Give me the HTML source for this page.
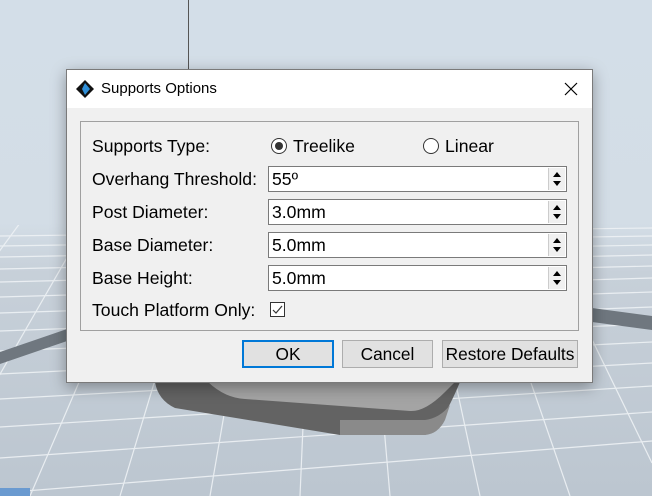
<!DOCTYPE html>
<html style="overflow:hidden;height:496px"><head><style>
body{margin:0;width:652px;height:496px;overflow:hidden;position:relative;font-family:"Liberation Sans",sans-serif;background:#d3dee8;}
.abs{position:absolute}
.dlg{left:66px;top:69px;width:525px;height:312px;background:#f0f0f0;border:1px solid #7a7a7a;box-shadow:0 4px 14px rgba(0,0,0,.35)}
.tb{left:0;top:0;width:525px;height:38px;background:#fff}
.lbl{font-size:17.6px;color:#000}
.spin{left:201px;width:297px;height:24px;background:#fff;border:1px solid #7a7a7a}
.spin span{position:absolute;left:3px;top:2px;font-size:17.6px}
.arr{position:absolute;right:1px;top:1px;width:16px;height:22px;background:#f0f0f0;border-left:1px solid #ccc}
.arr:before{content:"";position:absolute;left:4px;top:4px;border:4px solid transparent;border-bottom:5px solid #000;border-top:0}
.arr:after{content:"";position:absolute;left:4px;top:13px;border:4px solid transparent;border-top:5px solid #000;border-bottom:0}
.btn{top:270px;height:26px;background:#e1e1e1;border:1px solid #adadad;font-size:17.3px;text-align:center;line-height:26px}
</style></head><body>
<svg class="abs" style="left:0;top:0;display:block" width="652" height="496">
<defs><linearGradient id="g" x1="0" y1="0" x2="0" y2="1"><stop offset="0" stop-color="#d3dee8"/><stop offset="0.45" stop-color="#d3dde6"/><stop offset="0.55" stop-color="#c7d0d9"/><stop offset="1" stop-color="#bcc6d0"/></linearGradient>
<clipPath id="c"><rect x="0" y="225" width="652" height="271"/></clipPath></defs>
<rect width="652" height="496" fill="url(#g)"/>
<g clip-path="url(#c)" stroke="#eef2f5" stroke-width="1.2" opacity="0.9">
<line x1="0" y1="236" x2="652" y2="228"/><line x1="0" y1="246" x2="652" y2="236"/><line x1="0" y1="257" x2="652" y2="245"/><line x1="0" y1="269" x2="652" y2="255"/><line x1="0" y1="282" x2="652" y2="266"/><line x1="0" y1="297" x2="652" y2="278"/><line x1="0" y1="313" x2="652" y2="292"/><line x1="0" y1="331" x2="652" y2="307"/><line x1="0" y1="351" x2="652" y2="324"/><line x1="0" y1="374" x2="652" y2="342"/><line x1="0" y1="399" x2="652" y2="363"/><line x1="0" y1="427" x2="652" y2="386"/><line x1="0" y1="458" x2="652" y2="412"/><line x1="0" y1="493" x2="652" y2="441"/>
<line x1="330" y1="-200" x2="-700" y2="496"/><line x1="330" y1="-200" x2="-560" y2="496"/><line x1="330" y1="-200" x2="-430" y2="496"/><line x1="330" y1="-200" x2="-300" y2="496"/><line x1="330" y1="-200" x2="-180" y2="496"/><line x1="330" y1="-200" x2="-70" y2="496"/><line x1="330" y1="-200" x2="30" y2="496"/><line x1="330" y1="-200" x2="120" y2="496"/><line x1="330" y1="-200" x2="210" y2="496"/><line x1="330" y1="-200" x2="300" y2="496"/><line x1="330" y1="-200" x2="390" y2="496"/><line x1="330" y1="-200" x2="480" y2="496"/><line x1="330" y1="-200" x2="570" y2="496"/><line x1="330" y1="-200" x2="652" y2="463"/>
</g>
<path d="M0 352 L70 328 L70 340 L0 364Z" fill="#6f777f"/>
<path d="M592 308 L652 316 L652 330 L592 322Z" fill="#6f777f"/>
<rect x="0" y="488" width="30" height="8" fill="#6a9ad0"/>
<path d="M155 382 Q158 400 175 408 L340 435 L425 435 Q440 430 460 382 Z" fill="#636363"/>
<path d="M340 420 L425 420 Q440 418 450 405 L445 420 Q438 434 425 435 L340 435Z" fill="#8a8a8a"/>
<path d="M208 382 Q225 398 245 399 L410 411 Q425 412 445 392 L455 382Z" fill="#a4a4a4"/>
</svg>
<div class="abs" style="left:188px;top:0;width:1px;height:69px;background:#555"></div>
<div class="abs dlg">
 <div class="abs tb">
  <svg class="abs" style="left:9px;top:10px" width="18" height="18"><path d="M9 0 L18 9 L9 18 L0 9Z" fill="#111"/><path d="M9 3 L14 9 L9 15 L6 9Z" fill="#2f8fd8"/></svg>
  <div class="abs" style="left:34px;top:10px;font-size:15px">Supports Options</div>
  <svg class="abs" style="left:497px;top:12px" width="14" height="14"><path d="M1 1L13 13M13 1L1 13" stroke="#000" stroke-width="1.2"/></svg>
 </div>
 <div class="abs" style="left:13px;top:51px;width:497px;height:208px;border:1px solid #a0a0a0"></div>
 <div class="abs lbl" style="left:25px;top:66px">Supports Type:</div>
 <div class="abs" style="left:204px;top:68px;width:14px;height:14px;border:1px solid #333;border-radius:50%;background:#fff"><div style="margin:3px;width:8px;height:8px;border-radius:50%;background:#333"></div></div>
 <div class="abs lbl" style="left:226px;top:66px">Treelike</div>
 <div class="abs" style="left:356px;top:68px;width:14px;height:14px;border:1px solid #333;border-radius:50%;background:#fff"></div>
 <div class="abs lbl" style="left:378px;top:66px">Linear</div>
 <div class="abs lbl" style="left:25px;top:99px">Overhang Threshold:</div>
 <div class="abs spin" style="top:96px"><span>55º</span><div class="arr"></div></div>
 <div class="abs lbl" style="left:25px;top:132px">Post Diameter:</div>
 <div class="abs spin" style="top:129px"><span>3.0mm</span><div class="arr"></div></div>
 <div class="abs lbl" style="left:25px;top:165px">Base Diameter:</div>
 <div class="abs spin" style="top:162px"><span>5.0mm</span><div class="arr"></div></div>
 <div class="abs lbl" style="left:25px;top:198px">Base Height:</div>
 <div class="abs spin" style="top:195px"><span>5.0mm</span><div class="arr"></div></div>
 <div class="abs lbl" style="left:25px;top:230px">Touch Platform Only:</div>
 <div class="abs" style="left:203px;top:232px;width:13px;height:13px;border:1px solid #333;background:#fff"><svg width="13" height="13" style="display:block"><path d="M2 7L5 10L11 3" stroke="#333" fill="none" stroke-width="1.2"/></svg></div>
 <div class="abs btn" style="left:175px;width:88px;border:2px solid #0078d7;height:24px;line-height:24px">OK</div>
 <div class="abs btn" style="left:275px;width:89px">Cancel</div>
 <div class="abs btn" style="left:375px;width:134px">Restore Defaults</div>
</div>
</body></html>
